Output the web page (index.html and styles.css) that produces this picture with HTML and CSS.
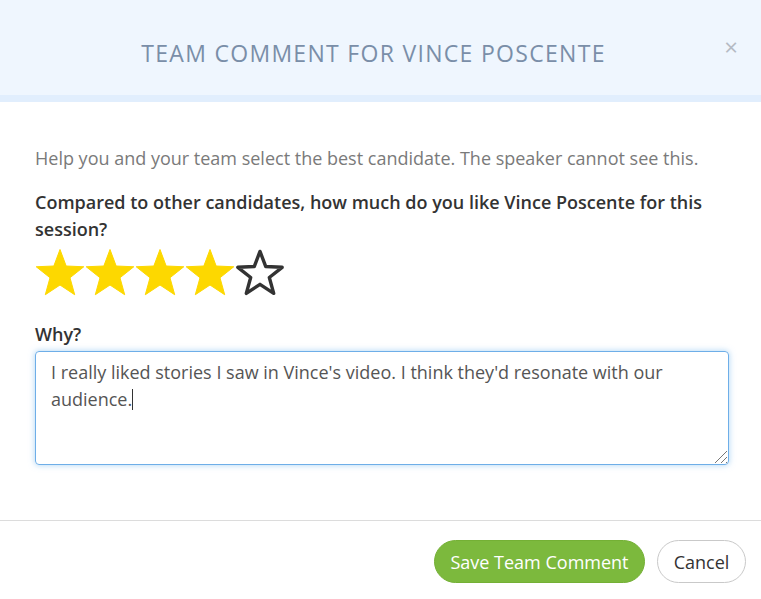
FILE: index.html
```html
<!DOCTYPE html>
<html>
<head>
<meta charset="utf-8">
<link rel="stylesheet" href="styles.css">
</head>
<body>
<div class="modal">
  <header class="modal-header">
    <h1 class="modal-title">Team Comment for Vince Poscente</h1>
    <span class="close">&#215;</span>
  </header>
  <section class="modal-body">
    <p class="intro">Help you and your team select the best candidate. The speaker cannot see this.</p>
    <p class="question">Compared to other candidates, how much do you like Vince Poscente for this session?</p>
    <div class="stars">
      <svg class="star" viewBox="0 0 50 48"><polygon class="on" points="25,0.5 31.17,17.01 48.78,17.78 34.99,28.74 39.69,45.73 25,36 10.31,45.73 15.01,28.74 1.22,17.78 18.83,17.01"/></svg>
      <svg class="star" viewBox="0 0 50 48"><polygon class="on" points="25,0.5 31.17,17.01 48.78,17.78 34.99,28.74 39.69,45.73 25,36 10.31,45.73 15.01,28.74 1.22,17.78 18.83,17.01"/></svg>
      <svg class="star" viewBox="0 0 50 48"><polygon class="on" points="25,0.5 31.17,17.01 48.78,17.78 34.99,28.74 39.69,45.73 25,36 10.31,45.73 15.01,28.74 1.22,17.78 18.83,17.01"/></svg>
      <svg class="star" viewBox="0 0 50 48"><polygon class="on" points="25,0.5 31.17,17.01 48.78,17.78 34.99,28.74 39.69,45.73 25,36 10.31,45.73 15.01,28.74 1.22,17.78 18.83,17.01"/></svg>
      <svg class="star" viewBox="0 0 50 48"><polygon class="off" points="25,2.4 30.76,17.57 47.16,18.3 34.32,28.53 38.7,44.35 25,35.3 11.3,44.35 15.68,28.53 2.84,18.3 19.24,17.57"/></svg>
    </div>
    <label class="why">Why?</label>
    <div class="textarea">I really liked stories I saw in Vince's video. I think they'd resonate with our audience.<span class="caret"></span><span class="grip"></span></div>
  </section>
  <footer class="modal-footer">
    <button class="btn btn-save">Save Team Comment</button>
    <button class="btn btn-cancel">Cancel</button>
  </footer>
</div>
</body>
</html>
```

FILE: styles.css
```css
* { box-sizing: border-box; }
html, body { margin: 0; padding: 0; background: #fff; }
body {
  font-family: "Open Sans", "Noto Sans", "Liberation Sans", sans-serif;
  color: #333;
  width: 761px;
  height: 599px;
  overflow: hidden;
}
.modal-header {
  position: relative;
  height: 102px;
  background: #eff6fe;
  border-bottom: 7px solid #e1eefd;
  display: flex;
  align-items: center;
  justify-content: center;
}
.modal-title {
  margin: 0;
  font-size: 23px;
  font-weight: 400;
  text-transform: uppercase;
  letter-spacing: 1.3px;
  color: #7a8ea8;
  padding: 10px 14px 0 0;
}
.close {
  position: absolute;
  right: 23px;
  top: 34px;
  font-size: 24px;
  color: #b5bbc4;
  line-height: 26px;
}
.modal-body {
  padding: 44px 35px 0 35px;
  height: 419px;
  border-bottom: 1px solid #dcdcdc;
}
.intro {
  margin: 0;
  font-size: 18px;
  line-height: 24px;
  color: #7a7a7a;
}
.question {
  margin: 19px 0 0 0;
  font-size: 18px;
  line-height: 27px;
  font-weight: 600;
  color: #333;
}
.stars {
  display: flex;
  margin-top: 6px;
  height: 48px;
  align-items: center;
}
.star { width: 50px; height: 48px; display: block; }
.star .on { fill: #fdd800; stroke: #fdd800; stroke-width: 1; stroke-linejoin: round; }
.star .off { fill: #fff; stroke: #333; stroke-width: 3.4; stroke-linejoin: round; }
.why {
  display: block;
  margin-top: 25px;
  font-size: 18px;
  line-height: 24px;
  font-weight: 600;
  color: #333;
}
.textarea {
  position: relative;
  margin-top: 5px;
  width: 694px;
  height: 114px;
  border: 1px solid #6eaee8;
  border-radius: 4px;
  box-shadow: 0 0 6px rgba(102, 175, 233, 0.55);
  padding: 7px 15px;
  font-size: 18px;
  line-height: 27px;
  color: #555;
}
.caret {
  display: inline-block;
  width: 1px;
  height: 21px;
  background: #333;
  vertical-align: -4px;
}
.grip {
  position: absolute;
  right: 1px;
  bottom: 1px;
  width: 14px;
  height: 14px;
  background: repeating-linear-gradient(135deg, transparent 0 3px, #777 3px 4px);
  clip-path: polygon(100% 0, 100% 100%, 0 100%);
}
.modal-footer {
  display: flex;
  justify-content: flex-end;
  align-items: center;
  gap: 12px;
  padding: 19px 15px 0 0;
}
.btn {
  font-family: inherit;
  font-size: 18px;
  height: 43px;
  border-radius: 22px;
  padding: 0 8px;
  white-space: nowrap;
  cursor: pointer;
}
.btn-save {
  background: #7cb93d;
  border: 1px solid #74b035;
  color: #fff;
  width: 211px;
}
.btn-cancel {
  background: #fff;
  border: 1px solid #c9c9c9;
  color: #333;
  width: 89px;
}
```
